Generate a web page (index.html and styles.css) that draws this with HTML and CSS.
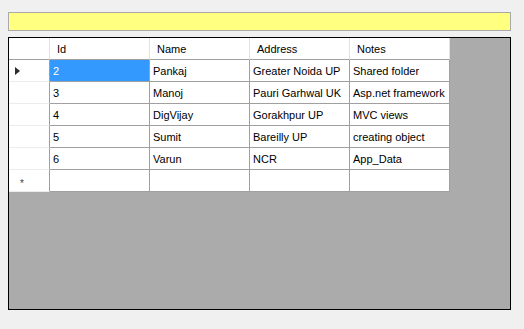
FILE: index.html
```html
<!DOCTYPE html>
<html>
    <head>
        <meta charset="UTF-8">
        <meta name="viewport" content="width=device-width, initial-scale=1.0">
        <link rel="stylesheet" href="styles.css">
        <title>DataGridView</title>
    </head>
    <body>

        <div id="wrapform">
            <div id="searchbox"></div>

            <div id="grid">
                <div class="table">
                    <div class="corner"></div>
                    <div class="colhead">Id</div>
                    <div class="colhead">Name</div>
                    <div class="colhead">Address</div>
                    <div class="colhead">Notes</div>

                    <div class="rowhead"><span class="arrow"></span></div>
                    <div class="cell selected">2</div>
                    <div class="cell">Pankaj</div>
                    <div class="cell">Greater Noida UP</div>
                    <div class="cell">Shared folder</div>

                    <div class="rowhead"></div>
                    <div class="cell">3</div>
                    <div class="cell">Manoj</div>
                    <div class="cell">Pauri Garhwal UK</div>
                    <div class="cell">Asp.net framework</div>

                    <div class="rowhead"></div>
                    <div class="cell">4</div>
                    <div class="cell">DigVijay</div>
                    <div class="cell">Gorakhpur UP</div>
                    <div class="cell">MVC views</div>

                    <div class="rowhead"></div>
                    <div class="cell">5</div>
                    <div class="cell">Sumit</div>
                    <div class="cell">Bareilly UP</div>
                    <div class="cell">creating object</div>

                    <div class="rowhead"></div>
                    <div class="cell">6</div>
                    <div class="cell">Varun</div>
                    <div class="cell">NCR</div>
                    <div class="cell">App_Data</div>

                    <div class="rowhead newrow">*</div>
                    <div class="cell"></div>
                    <div class="cell"></div>
                    <div class="cell"></div>
                    <div class="cell"></div>
                </div>
            </div>
        </div>

    </body>
</html>
```

FILE: styles.css
```css
body {
    margin: 0;
    padding: 0;
    background: #f0f0f0;
    font-family: "Liberation Sans", Arial, sans-serif;
    font-size: 11px;
    color: #000;
}

#wrapform {
    padding: 12px 13px 0 8px;
}

#searchbox {
    height: 17px;
    background: #ffff80;
    border: 1px solid #a9a9a9;
}

#grid {
    margin-top: 6px;
    height: 271px;
    background: #ababab;
    border: 1px solid #000;
    overflow: hidden;
}

.table {
    display: grid;
    grid-template-columns: 41px repeat(4, 100px);
    grid-auto-rows: 22px;
    width: 441px;
    background: #fff;
}

.corner,
.colhead,
.rowhead,
.cell {
    box-sizing: border-box;
    display: flex;
    align-items: center;
    white-space: nowrap;
    overflow: hidden;
}

.corner {
    border-right: 1px solid #e2e2e2;
    border-bottom: 1px solid #a0a0a0;
}

.colhead {
    padding-left: 7px;
    padding-top: 1px;
    border-right: 1px solid #e2e2e2;
    border-bottom: 1px solid #a0a0a0;
}

.rowhead {
    position: relative;
    background: #fff;
    border-right: 1px solid #a0a0a0;
    border-bottom: 1px solid #ececec;
}

.rowhead.newrow {
    padding-left: 11px;
    padding-top: 5px;
    font-size: 10px;
    color: #444;
}

.arrow {
    margin-left: 6px;
    width: 0;
    height: 0;
    border-top: 4px solid transparent;
    border-bottom: 4px solid transparent;
    border-left: 5px solid #2b2b2b;
}

.cell {
    padding-left: 3px;
    padding-top: 1px;
    border-right: 1px solid #a0a0a0;
    border-bottom: 1px solid #a0a0a0;
}

.cell.selected {
    background: #3399ff;
    color: #fff;
}
```
